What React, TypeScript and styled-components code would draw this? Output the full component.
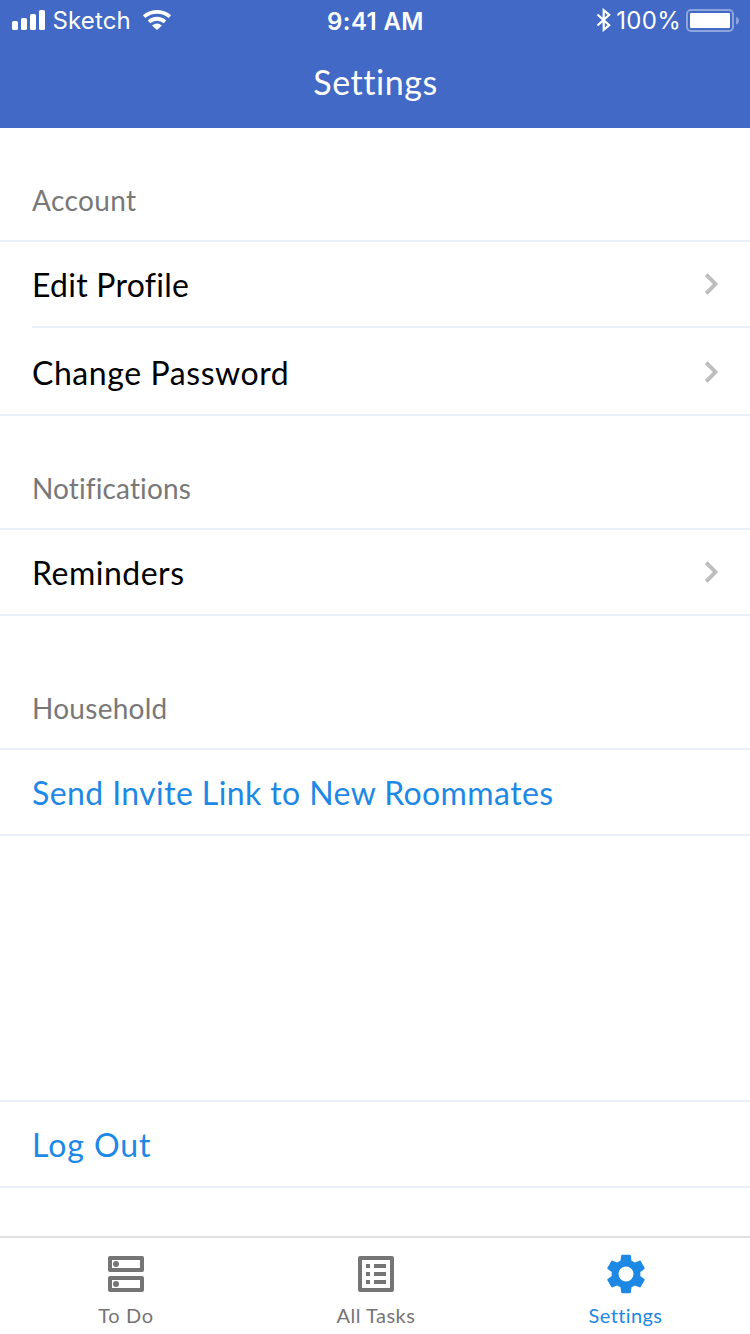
import React from "react";
import styled, { createGlobalStyle } from "styled-components";

const GlobalStyle = createGlobalStyle`
  *, *::before, *::after { box-sizing: border-box; }
  html, body { margin: 0; padding: 0; background: #fff; }
  body { font-family: Lato, "Liberation Sans", sans-serif; }
`;

const Screen = styled.div`
  width: 750px;
  height: 1334px;
  display: flex;
  flex-direction: column;
  background: #fff;
  overflow: hidden;
`;

const Header = styled.header`
  height: 128px;
  flex: none;
  background: #4169c5;
  color: #fff;
`;

const StatusBar = styled.div`
  height: 40px;
  display: grid;
  grid-template-columns: 1fr auto 1fr;
  padding: 0 10px 0 12px;
  font-family: Inter, "Liberation Sans", sans-serif;
  font-size: 24px;
  line-height: 40px;
`;

const StatusGroup = styled.div<{ $end?: boolean }>`
  height: 40px;
  display: flex;
  align-items: center;
  justify-content: ${(p) => (p.$end ? "flex-end" : "flex-start")};
  svg { display: block; flex: none; }
`;

const StatusText = styled.span<{ $spacing: number; $left: number; $right: number }>`
  padding-top: 2px;
  letter-spacing: ${(p) => p.$spacing}px;
  margin-left: ${(p) => p.$left}px;
  margin-right: ${(p) => p.$right}px;
  white-space: nowrap;
`;

const Clock = styled.span`
  padding-right: 1px;
  font-weight: 600;
  letter-spacing: 0.4px;
  line-height: 44px;
  white-space: nowrap;
`;

const Title = styled.h1`
  margin: 0;
  padding-left: 1px;
  text-align: center;
  font-size: 34px;
  font-weight: 400;
  line-height: 84px;
  letter-spacing: 0.55px;
`;

const Content = styled.main`
  flex: 1;
  display: flex;
  flex-direction: column;
`;

const Section = styled.section<{ $top: number }>`
  padding-top: ${(p) => p.$top}px;
`;

const SectionTitle = styled.h2<{ $spacing: number }>`
  margin: 0;
  padding: 0 32px;
  height: 62px;
  line-height: 44px;
  font-size: 28px;
  font-weight: 400;
  color: #787878;
  letter-spacing: ${(p) => p.$spacing}px;
`;

const List = styled.div`
  border-top: 2px solid #eaedfa;
  border-bottom: 2px solid #eaedfa;
`;

const Row = styled.div<{ $height: number; $divided?: boolean; $link?: boolean; $spacing: number }>`
  height: ${(p) => p.$height}px;
  margin-left: 32px;
  padding-top: ${(p) => p.$height - (p.$divided ? 2 : 0) - 84}px;
  padding-right: 31px;
  display: flex;
  align-items: center;
  justify-content: space-between;
  border-bottom: ${(p) => (p.$divided ? "2px solid #eaedfa" : "none")};
  color: ${(p) => (p.$link ? "#1e88e5" : "#000")};
  font-size: 32px;
  letter-spacing: ${(p) => p.$spacing}px;
  svg { display: block; }
`;

const RowLabel = styled.span`
  line-height: 44px;
  padding-top: 2px;
  white-space: nowrap;
`;

const TabBar = styled.nav`
  flex: none;
  height: 98px;
  display: grid;
  grid-template-columns: repeat(3, 1fr);
  border-top: 2px solid #e2e2e2;
`;

const Tab = styled.div<{ $active?: boolean; $spacing: number }>`
  display: flex;
  flex-direction: column;
  align-items: center;
  padding: 12px 0 0 ${(p) => (p.$active ? 1 : 2)}px;
  color: ${(p) => (p.$active ? "#1e88e5" : "#757575")};
  font-size: 20px;
  line-height: 24px;
  letter-spacing: ${(p) => p.$spacing}px;
  svg { display: block; margin-bottom: 5px; }
`;

const Signal = () => (
  <svg width="34" height="20" viewBox="0 0 34 20" fill="currentColor">
    <rect x="0" y="11" width="6" height="9" rx="1.6" />
    <rect x="9" y="8" width="6" height="12" rx="1.6" />
    <rect x="18" y="4" width="6" height="16" rx="1.6" />
    <rect x="27" y="0" width="6" height="20" rx="1.6" />
  </svg>
);

const Wifi = () => (
  <svg width="30" height="20" viewBox="0 0 30 20" fill="none" stroke="currentColor" strokeWidth="3.8">
    <path d="M2.1 6.6a20 20 0 0 1 25.8 0" />
    <path d="M7 11.8a12 12 0 0 1 16 0" />
    <path d="M10 15.6a8 8 0 0 1 10 0L15 20z" fill="currentColor" stroke="none" />
  </svg>
);

const Bluetooth = () => (
  <svg width="16" height="24" viewBox="0 0 16 24" fill="none" stroke="currentColor" strokeWidth="2.2">
    <path d="M1.5 6.5 13.2 17.2 7.7 21.8V2.2L13.2 6.8 1.5 17.5" />
  </svg>
);

const Battery = () => (
  <svg width="54" height="24" viewBox="0 0 54 24">
    <rect x="1" y="2" width="46" height="21" rx="4" fill="none" stroke="#fff" strokeOpacity=".4" strokeWidth="2" />
    <rect x="4" y="5" width="40" height="15" rx="1" fill="#fff" />
    <path d="M50 9q3 1 3 3.8t-3 3.8z" fill="#fff" fillOpacity=".4" />
  </svg>
);

const Chevron = () => (
  <svg width="14" height="22" viewBox="0 0 14 22" fill="none" stroke="#bdbdbd" strokeWidth="3.8">
    <path d="m1.2 1.7 9.3 9.3-9.3 9.3" />
  </svg>
);

const TodoIcon = () => (
  <svg width="48" height="48" viewBox="0 0 48 48" fill="none" stroke="currentColor" strokeWidth="4" strokeLinejoin="round">
    <rect x="8" y="8" width="32" height="12" />
    <rect x="8" y="28" width="32" height="12" />
    <g fill="currentColor" stroke="none">
      <circle cx="14" cy="14" r="3" />
      <circle cx="14" cy="34" r="3" />
    </g>
  </svg>
);

const TasksIcon = () => (
  <svg width="48" height="48" viewBox="0 0 48 48" fill="currentColor">
    <rect x="8" y="8" width="32" height="32" fill="none" stroke="currentColor" strokeWidth="4" strokeLinejoin="round" />
    <path d="M14 14h4v4h-4zM22 14h12v4H22zM14 22h4v4h-4zM22 22h12v4H22zM14 30h4v4h-4zM22 30h12v4H22z" />
  </svg>
);

const GearIcon = () => (
  <svg width="48" height="48" viewBox="0 0 24 24" fill="currentColor">
    <g transform="translate(12 12) scale(.96) translate(-12 -12)">
      <path
        fillRule="evenodd"
        d="M19.43 12.98c.04-.32.07-.64.07-.98s-.03-.66-.07-.98l2.11-1.65c.19-.15.24-.42.12-.64l-2-3.46c-.12-.22-.39-.3-.61-.22l-2.49 1c-.52-.4-1.08-.73-1.69-.98l-.38-2.65C14.46 2.18 14.25 2 14 2h-4c-.25 0-.46.18-.49.42l-.38 2.65c-.61.25-1.17.59-1.69.98l-2.49-1c-.23-.09-.49 0-.61.22l-2 3.46c-.13.22-.07.49.12.64l2.11 1.65c-.04.32-.07.65-.07.98s.03.66.07.98l-2.11 1.65c-.19.15-.24.42-.12.64l2 3.46c.12.22.39.3.61.22l2.49-1c.52.4 1.08.73 1.69.98l.38 2.65c.03.24.24.42.49.42h4c.25 0 .46-.18.49-.42l.38-2.65c.61-.25 1.17-.59 1.69-.98l2.49 1c.23.09.49 0 .61-.22l2-3.46c.12-.22.07-.49-.12-.64l-2.11-1.65zM12 15.9a3.9 3.9 0 1 1 0-7.8 3.9 3.9 0 0 1 0 7.8z"
      />
    </g>
  </svg>
);

const App = () => (
  <>
    <GlobalStyle />
    <Screen>
      <Header>
        <StatusBar>
          <StatusGroup>
            <Signal />
            <StatusText $spacing={0.15} $left={6.5} $right={11.5}>Sketch</StatusText>
            <Wifi />
          </StatusGroup>
          <Clock>9:41 AM</Clock>
          <StatusGroup $end>
            <Bluetooth />
            <StatusText $spacing={0.3} $left={4.5} $right={5}>100%</StatusText>
            <Battery />
          </StatusGroup>
        </StatusBar>
        <Title>Settings</Title>
      </Header>
      <Content>
        <Section $top={50}>
          <SectionTitle $spacing={0.38}>Account</SectionTitle>
          <List>
            <Row $height={86} $divided $spacing={0.25}><RowLabel>Edit Profile</RowLabel><Chevron /></Row>
            <Row $height={86} $spacing={0.57}><RowLabel>Change Password</RowLabel><Chevron /></Row>
          </List>
        </Section>
        <Section $top={50}>
          <SectionTitle $spacing={0.12}>Notifications</SectionTitle>
          <List>
            <Row $height={84} $spacing={0.5}><RowLabel>Reminders</RowLabel><Chevron /></Row>
          </List>
        </Section>
        <Section $top={70}>
          <SectionTitle $spacing={0.27}>Household</SectionTitle>
          <List>
            <Row $height={84} $link $spacing={0.4}><RowLabel>Send Invite Link to New Roommates</RowLabel></Row>
          </List>
        </Section>
        <Section $top={264}>
          <List>
            <Row $height={84} $link $spacing={0.95}><RowLabel>Log Out</RowLabel></Row>
          </List>
        </Section>
      </Content>
      <TabBar>
        <Tab $spacing={0.7}><TodoIcon />To Do</Tab>
        <Tab $spacing={0.5}><TasksIcon />All Tasks</Tab>
        <Tab $active $spacing={0.4}><GearIcon />Settings</Tab>
      </TabBar>
    </Screen>
  </>
);

export default App;
